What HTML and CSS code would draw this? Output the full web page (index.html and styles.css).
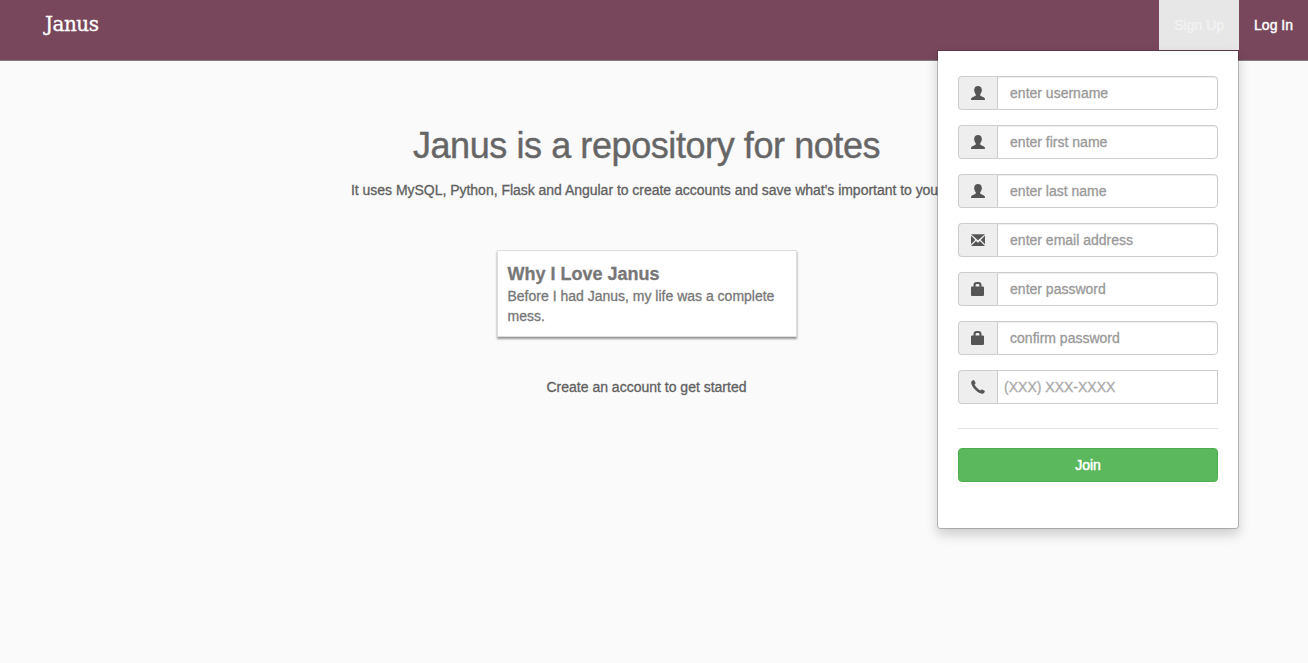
FILE: index.html
```html
<!DOCTYPE html>
<html lang="en">
<head>
<meta charset="utf-8">
<title>Janus</title>
<link rel="stylesheet" href="styles.css">
</head>
<body>
<svg class="sprite" aria-hidden="true">
  <symbol id="user" viewBox="0 0 14 14"><path d="M7 0C4.600 0 3.300 1.300 3.300 3.600C2.900 4 3 5 3.500 5.500C3.700 6.900 4.200 7.700 4.800 8.300V9.500C4.300 10.300 1.200 11 .4 11.900C0 12.400 0 13.200 0 14H14C14 13.200 14 12.400 13.600 11.900C12.800 11 9.700 10.300 9.200 9.500V8.300C9.800 7.700 10.300 6.900 10.500 5.500C11 5 11.100 4 10.700 3.600C10.700 1.300 9.400 0 7 0Z"/></symbol>
  <symbol id="mail" viewBox="0 0 14 14"><path d="M0 1.200H14L7 7.200ZM0 2.600L4.200 6.900L0 11.300ZM14 2.600V11.300L9.800 6.900ZM5 8L7 9.700L9 8L14 13H0Z"/></symbol>
  <symbol id="lock" viewBox="0 0 14 14"><path fill-rule="evenodd" d="M2.500 4.500V3C2.500 1 3.500 0 5.500 0H7.500C9.500 0 10.500 1 10.500 3V4.500H12Q13 4.500 13 5.500V13Q13 14 12 14H1Q0 14 0 13V5.500Q0 4.500 1 4.500ZM4.600 4.500H8.400V3.200Q8.400 2 7.200 2H5.800Q4.600 2 4.600 3.200Z"/></symbol>
  <symbol id="phone" viewBox="0 0 14 14"><path d="M1.200 .8L2.500 .1Q3 0 3.300 .5L4.500 2.800Q4.700 3.300 4.300 3.700L3.500 4.600C4.200 6.500 7.100 9.500 9.300 10.500L10.200 9.700Q10.600 9.300 11.100 9.500L13.500 10.700Q14 11 13.800 11.500L13.200 12.800C12.600 13.800 11.400 14 10.200 13.600C5.900 12.100 1.900 8.100 .4 3.900C0 2.700 .2 1.400 1.200 .8Z"/></symbol>
</svg>
<nav class="navbar">
  <a class="brand">Janus</a>
  <ul class="nav">
    <li class="nav-item open">
      <a class="nav-link">Sign Up</a>
      <form class="menu">
        <label class="group"><span class="addon"><svg class="icon"><use href="#user"/></svg></span><input class="field" type="text" placeholder="enter username"></label>
        <label class="group"><span class="addon"><svg class="icon"><use href="#user"/></svg></span><input class="field" type="text" placeholder="enter first name"></label>
        <label class="group"><span class="addon"><svg class="icon"><use href="#user"/></svg></span><input class="field" type="text" placeholder="enter last name"></label>
        <label class="group"><span class="addon"><svg class="icon"><use href="#mail"/></svg></span><input class="field" type="text" placeholder="enter email address"></label>
        <label class="group"><span class="addon"><svg class="icon"><use href="#lock"/></svg></span><input class="field" type="password" placeholder="enter password"></label>
        <label class="group"><span class="addon"><svg class="icon"><use href="#lock"/></svg></span><input class="field" type="password" placeholder="confirm password"></label>
        <label class="group"><span class="addon"><svg class="icon"><use href="#phone"/></svg></span><input class="field phone" type="text" placeholder="(XXX) XXX-XXXX"></label>
        <hr class="divider">
        <button class="join" type="button">Join</button>
      </form>
    </li>
    <li class="nav-item"><a class="nav-link">Log In</a></li>
  </ul>
</nav>
<main class="content">
  <h1 class="title">Janus is a repository for notes</h1>
  <p class="lead">It uses MySQL, Python, Flask and Angular to create accounts and save what's important to you.</p>
  <article class="note">
    <h2 class="note-title">Why I Love Janus</h2>
    <p class="note-text">Before I had Janus, my life was a complete mess.</p>
  </article>
  <p class="cta">Create an account to get started</p>
</main>
</body>
</html>
```
FILE: styles.css
```css
* { box-sizing: border-box; }
body {
  margin: 0;
  height: 663px;
  overflow: hidden;
  background: #fafafa;
  color: #606060;
  font: 14px/20px "Liberation Sans", Arial, sans-serif;
  -webkit-text-stroke: 0.3px currentColor;
}
.sprite { display: none; }
.navbar {
  display: flex;
  justify-content: space-between;
  height: 61px;
  padding-left: 45px;
  background: #78475b;
  border-bottom: 1px solid #807b7e;
}
.brand {
  padding-top: 14px;
  color: #fff;
  font: 20px/20px "DejaVu Serif", serif;
  letter-spacing: -0.5px;
  -webkit-text-stroke: 0.35px currentColor;
}
.nav { display: flex; margin: 0; padding: 0; list-style: none; }
.nav-item { position: relative; }
.nav-link {
  display: block;
  height: 50px;
  padding: 15px;
  color: #fff;
  white-space: nowrap;
  -webkit-text-stroke: 0.4px currentColor;
}
.open .nav-link { background: #e7e7e7; color: #f2f2f2; }
.menu {
  position: absolute;
  z-index: 2;
  top: 50px;
  right: 0;
  width: 302px;
  height: 479px;
  margin: 0;
  padding: 25px 20px;
  background: #fff;
  background-clip: padding-box;
  border: 1px solid rgba(0, 0, 0, .2);
  border-radius: 0 0 4px 4px;
  box-shadow: 0 6px 12px rgba(0, 0, 0, .175);
}
.group { display: flex; height: 34px; margin-bottom: 15px; }
.addon {
  display: flex;
  align-items: center;
  justify-content: center;
  width: 39px;
  background: #eee;
  border: 1px solid #ccc;
  border-right: 0;
  border-radius: 4px 0 0 4px;
  color: #555;
}
.icon { width: 14px; height: 14px; fill: currentColor; stroke: none; }
.field {
  flex: 1;
  min-width: 0;
  padding: 6px 12px;
  background: #fff;
  border: 1px solid #ccc;
  border-radius: 0 4px 4px 0;
  box-shadow: inset 0 1px 1px rgba(0, 0, 0, .075);
  font: inherit;
}
.field::placeholder { color: #999; opacity: 1; -webkit-text-stroke: 0.3px #999; }
.phone { padding: 6px; border-radius: 0; box-shadow: none; }
.phone::placeholder { color: #a9a9a9; -webkit-text-stroke: 0.3px #a9a9a9; }
.divider { width: 100%; margin: 24px 0 19px; border: 0; border-top: 1px solid #e3e3e3; }
.join {
  display: block;
  width: 100%;
  height: 34px;
  padding: 0;
  background: #5cb85c;
  border: 1px solid #4cae4c;
  border-radius: 4px;
  color: #fff;
  font: inherit;
  -webkit-text-stroke: 0.5px currentColor;
}
.content {
  display: flex;
  flex-direction: column;
  align-items: center;
  width: 1293px;
  padding-top: 65px;
}
.title {
  margin: 0;
  color: #666;
  font-size: 36px;
  font-weight: 400;
  line-height: 40px;
  letter-spacing: -0.42px;
  -webkit-text-stroke: 0.4px currentColor;
}
.lead { margin: 14px 0 50px; white-space: nowrap; letter-spacing: -0.025px; }
.note {
  width: 300px;
  height: 87px;
  padding: 13px 10px 10px;
  background: #fff;
  border: 1px solid #ddd;
  box-shadow: 0 2px 2px rgba(0, 0, 0, .4);
  color: #777;
}
.note-title { margin: 0 0 2px; font-size: 18px; line-height: 20px; }
.note-text { margin: 0; }
.cta { margin: 40px 0 0; }
```
